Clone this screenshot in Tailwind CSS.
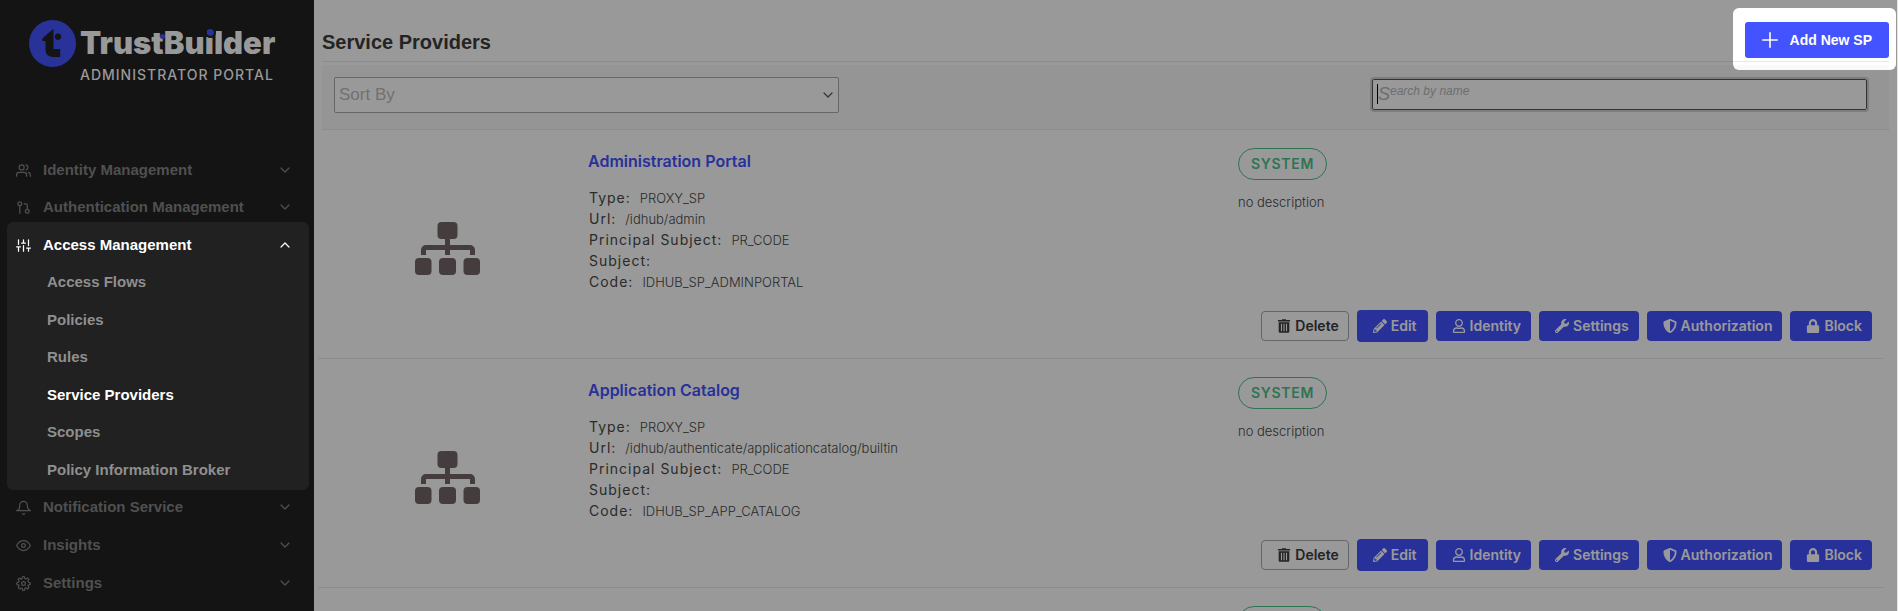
<!DOCTYPE html>
<html lang="en">
<head>
<meta charset="utf-8">
<title>TrustBuilder - Service Providers</title>
<script src="https://cdn.jsdelivr.net/npm/@tailwindcss/browser@4"></script>
</head>
<body class="flex h-screen overflow-hidden bg-white font-['Liberation_Sans',Arial,sans-serif]">

<svg class="hidden" xmlns="http://www.w3.org/2000/svg">
  <symbol id="down" viewBox="0 0 10 6"><path d="M1 1l4 4 4-4" fill="none" stroke="currentColor" stroke-width="1.2" stroke-linecap="round" stroke-linejoin="round"/></symbol>
  <symbol id="trash" viewBox="0 0 14 15"><path fill="currentColor" fill-rule="evenodd" d="M4.600 1.200L5 .3h4l.4.9H13.500v1.500H.5V1.200zM1.300 3.600h11.400v9.900a1.300 1.300 0 0 1-1.300 1.300H2.600a1.300 1.300 0 0 1-1.300-1.300zM3.700 5.200v7.900h1.200V5.200zM6.400 5.200v7.900h1.200V5.200zM9.100 5.200v7.900h1.200V5.200z"/></symbol>
  <symbol id="pencil" viewBox="0 0 512 512"><path fill="currentColor" d="M497.9 142.1l-46.1 46.1c-4.7 4.7-12.3 4.7-17 0l-111-111c-4.700-4.700-4.700-12.300 0-17l46.100-46.100c18.700-18.700 49.100-18.700 67.900 0l60.100 60.100c18.800 18.700 18.800 49.100 0 67.900zM284.200 99.800L21.600 362.400.4 483.900c-2.900 16.400 11.400 30.600 27.800 27.800l121.500-21.300 262.600-262.600c4.700-4.700 4.700-12.300 0-17l-111-111c-4.800-4.700-12.400-4.700-17.100 0zM124.100 339.900c-5.500-5.500-5.500-14.300 0-19.800l154-154c5.500-5.500 14.300-5.500 19.800 0s5.500 14.300 0 19.800l-154 154c-5.500 5.500-14.300 5.500-19.800 0zM88 424h48v36.300l-64.500 11.300-31.100-31.100L51.700 376H88v48z"/></symbol>
  <symbol id="user" viewBox="0 0 448 512"><path fill="currentColor" d="M313.600 304c-28.700 0-42.500 16-89.600 16-47.100 0-60.800-16-89.600-16C60.200 304 0 364.200 0 438.400V464c0 26.500 21.500 48 48 48h352c26.500 0 48-21.500 48-48v-25.600c0-74.200-60.200-134.400-134.400-134.400zM400 464H48v-25.600c0-47.600 38.800-86.400 86.400-86.400 14.600 0 38.300 16 89.600 16 51.700 0 74.900-16 89.600-16 47.600 0 86.400 38.800 86.400 86.400V464zM224 288c79.500 0 144-64.500 144-144S303.500 0 224 0 80 64.500 80 144s64.500 144 144 144zm0-240c52.900 0 96 43.100 96 96s-43.100 96-96 96-96-43.100-96-96 43.100-96 96-96z"/></symbol>
  <symbol id="wrench" viewBox="0 0 512 512"><path fill="currentColor" d="M507.730 109.100c-2.240-9.030-13.540-12.090-20.120-5.510l-74.360 74.360-67.880-11.310-11.310-67.880 74.360-74.360c6.620-6.620 3.430-17.900-5.660-20.160-47.380-11.740-99.550.91-136.580 37.930-39.640 39.640-50.550 97.100-34.050 147.200L18.740 402.760c-24.990 24.990-24.990 65.510 0 90.500 24.990 24.990 65.510 24.990 90.500 0l213.210-213.210c50.120 16.710 107.470 5.680 147.370-34.220 37.070-37.070 49.700-89.320 37.910-136.730zM64 472c-13.250 0-24-10.750-24-24 0-13.260 10.750-24 24-24s24 10.740 24 24c0 13.250-10.750 24-24 24z"/></symbol>
  <symbol id="shield" viewBox="0 0 512 512"><path fill="currentColor" d="M466.500 83.700l-192-80a48.150 48.150 0 0 0-36.900 0l-192 80C27.700 91.100 16 108.600 16 128c0 198.500 114.500 335.700 221.500 380.300 11.800 4.900 25.100 4.900 36.900 0C360.100 472.600 496 349.300 496 128c0-19.400-11.700-36.900-29.500-44.300zM256.100 446.300l-.1-381 175.900 73.300c-3.300 151.400-82.100 261.100-175.800 307.700z"/></symbol>
  <symbol id="lock" viewBox="0 0 448 512"><path fill="currentColor" d="M400 224h-24v-72C376 68.200 307.800 0 224 0S72 68.200 72 152v72H48c-26.500 0-48 21.500-48 48v192c0 26.500 21.500 48 48 48h352c26.500 0 48-21.500 48-48V272c0-26.500-21.500-48-48-48zm-104 0H152v-72c0-39.700 32.300-72 72-72s72 32.300 72 72v72z"/></symbol>
  <symbol id="sitemap" viewBox="0 0 65 53"><g fill="currentColor"><rect x="22.500" y="0" width="20" height="17" rx="4"/><rect x="0" y="36" width="16.500" height="17" rx="4"/><rect x="24" y="36" width="17" height="17" rx="4"/><rect x="48.500" y="36" width="16.500" height="17" rx="4"/><path d="M30 16h5v7h20a5 5 0 0 1 5 5v5h-5v-5H35v5h-5v-5H11v5H6v-5a5 5 0 0 1 5-5h19z"/></g></symbol>
</svg>

<aside class="flex w-[314px] shrink-0 flex-col bg-[#141414]">
  <header class="flex pl-[29px] pt-5">
    <svg class="size-12 shrink-0" viewBox="0 0 48 48" aria-hidden="true">
      <circle cx="23.500" cy="23.500" r="23.500" fill="#283299"/>
      <path fill="#141414" d="M24.500 8.800v20.200h6.700V37H23.500q-7-.5-7-7.500V21h-3.200V18.600z"/>
      <circle cx="29" cy="16.700" r="3.100" fill="#141414"/>
    </svg>
    <div class="flex w-[200px] flex-col pl-[3px] pt-1">
      <div class="text-[31px] leading-[38px] font-black text-[#999] font-['Inter',sans-serif]">Trust<span class="relative">B<span class="absolute -left-1 top-[10px] size-[5px] rounded-full bg-[#283299]"></span></span>u<span class="relative">i<span class="absolute left-[2px] top-[5px] size-[7px] rounded-full bg-[#283299] outline-2 outline-[#141414]"></span></span>lder</div>
      <div class="whitespace-nowrap text-[14px] leading-[26px] font-medium tracking-[1px] text-[#999] font-['Inter',sans-serif]">ADMINISTRATOR PORTAL</div>
    </div>
  </header>

  <nav class="mt-[68px] flex flex-col text-[15px] font-bold text-[#505050]">
    <div class="flex flex-col gap-[9px] pl-4 pr-6">
      <button class="flex h-7 items-center gap-3 text-left"><svg class="size-[15px]" viewBox="0 0 24 24" fill="none" stroke="currentColor" stroke-width="2" stroke-linecap="round" stroke-linejoin="round"><path d="M17 21v-2a4 4 0 0 0-4-4H5a4 4 0 0 0-4 4v2"/><circle cx="9" cy="7" r="4"/><path d="M23 21v-2a4 4 0 0 0-3-3.870M16 3.130a4 4 0 0 1 0 7.750"/></svg><span class="grow">Identity Management</span><svg class="h-[6px] w-[10px]"><use href="#down"/></svg></button>
      <button class="flex h-7 items-center gap-3 text-left"><svg class="size-[15px]" viewBox="0 0 24 24" fill="none" stroke="currentColor" stroke-width="2" stroke-linecap="round" stroke-linejoin="round"><circle cx="18" cy="18" r="3"/><circle cx="6" cy="6" r="3"/><path d="M13 6h3a2 2 0 0 1 2 2v7M6 9v12"/></svg><span class="grow">Authentication Management</span><svg class="h-[6px] w-[10px]"><use href="#down"/></svg></button>
    </div>
    <div class="ml-[7px] mr-[5px] mt-px flex h-[268px] flex-col justify-between rounded-md bg-[#212121] pl-[9px] pr-4 pt-[9px] pb-[6px] text-[#8f8f8f]">
      <button class="flex h-7 items-center gap-3 pr-[3px] text-left text-white"><svg class="size-[15px]" viewBox="0 0 24 24" fill="none" stroke="currentColor" stroke-width="2" stroke-linecap="round" stroke-linejoin="round"><path d="M4 21v-7M4 10V3M12 21v-9M12 8V3M20 21v-5M20 12V3M1 14h6M9 8h6M17 16h6"/></svg><span class="grow">Access Management</span><svg class="h-[6px] w-[10px] rotate-180"><use href="#down"/></svg></button>
      <a href="#" class="flex h-7 items-center pl-[31px]">Access Flows</a>
      <a href="#" class="flex h-7 items-center pl-[31px]">Policies</a>
      <a href="#" class="flex h-7 items-center pl-[31px]">Rules</a>
      <a href="#" class="flex h-7 items-center pl-[31px] text-white">Service Providers</a>
      <a href="#" class="flex h-7 items-center pl-[31px]">Scopes</a>
      <a href="#" class="flex h-7 items-center pl-[31px]">Policy Information Broker</a>
    </div>
    <div class="mt-[3px] flex flex-col gap-[10px] pl-4 pr-6">
      <button class="flex h-7 items-center gap-3 text-left"><svg class="size-[15px]" viewBox="0 0 24 24" fill="none" stroke="currentColor" stroke-width="2" stroke-linecap="round" stroke-linejoin="round"><path d="M18 8A6 6 0 0 0 6 8c0 7-3 9-5 9h22s-5-2-5-9M13.730 22a2 2 0 0 1-3.460 0"/></svg><span class="grow">Notification Service</span><svg class="h-[6px] w-[10px]"><use href="#down"/></svg></button>
      <button class="flex h-7 items-center gap-3 text-left"><svg class="size-[15px]" viewBox="0 0 24 24" fill="none" stroke="currentColor" stroke-width="2" stroke-linecap="round" stroke-linejoin="round"><path d="M1 12s4-8 11-8 11 8 11 8-4 8-11 8-11-8-11-8z"/><circle cx="12" cy="12" r="3"/></svg><span class="grow">Insights</span><svg class="h-[6px] w-[10px]"><use href="#down"/></svg></button>
      <button class="flex h-7 items-center gap-3 text-left"><svg class="size-[15px]" viewBox="0 0 24 24" fill="none" stroke="currentColor" stroke-width="2" stroke-linecap="round" stroke-linejoin="round"><circle cx="12" cy="12" r="3"/><path d="M19.400 15a1.650 1.650 0 0 0 .33 1.820l.06.06a2 2 0 0 1-2.830 2.830l-.06-.06a1.650 1.650 0 0 0-2.820 1.180V21a2 2 0 0 1-4 0v-.09A1.650 1.650 0 0 0 9 19.400a1.650 1.650 0 0 0-1.820.33l-.06.06a2 2 0 0 1-2.830-2.830l.06-.06a1.650 1.650 0 0 0-1.180-2.820H3a2 2 0 0 1 0-4h.09A1.650 1.650 0 0 0 4.600 9a1.650 1.650 0 0 0-.33-1.820l-.06-.06a2 2 0 0 1 2.830-2.830l.06.06A1.650 1.650 0 0 0 9 4.680a1.650 1.650 0 0 0 1-1.510V3a2 2 0 0 1 4 0v.09a1.650 1.650 0 0 0 2.820 1.180l.06-.06a2 2 0 0 1 2.830 2.830l-.06.06A1.650 1.650 0 0 0 19.400 9a1.650 1.650 0 0 0 1.510 1H21a2 2 0 0 1 0 4h-.09a1.650 1.650 0 0 0-1.510 1z"/></svg><span class="grow">Settings</span><svg class="h-[6px] w-[10px]"><use href="#down"/></svg></button>
    </div>
  </nav>
</aside>

<main class="relative flex grow flex-col overflow-hidden border-r border-[#e4e4e4]">
  <div class="mx-2 flex h-[62px] shrink-0 items-end justify-between border-b border-[#e9e9e9]">
    <h1 class="pb-[7px] text-xl leading-6 font-bold text-[#3c3c3c]">Service Providers</h1>
    <div class="relative pb-[3px]">
      <button class="flex h-9 items-center gap-3 rounded-[3px] bg-[#4353ff] px-[17px] text-sm font-bold text-white"><svg class="size-4" viewBox="0 0 16 16" stroke="currentColor" stroke-width="1.600" stroke-linecap="round"><path d="M8 .8v14.400M.8 8h14.400"/></svg>Add New SP</button>
      <!-- Tour spotlight: the shadow dims the rest of the page -->
      <div class="pointer-events-none absolute -top-[14px] -right-[7px] -bottom-[9px] -left-[12px] z-10 rounded-md shadow-[0_0_0_9999px_rgba(0,0,0,0.4)]"></div>
    </div>
  </div>

  <div class="mx-2 mt-[3px] flex h-[65px] shrink-0 items-start justify-between border-b border-[#e9e9e9] bg-[#f8f9fa] pl-3 pr-[22px] pt-3">
    <div class="relative flex w-[505px]">
      <select aria-label="Sort By" class="h-9 w-full appearance-none rounded-xs border border-[#aaa] bg-white px-1 text-[17px] text-[#bcbcbc]"><option>Sort By</option></select>
      <svg class="pointer-events-none absolute right-[6px] top-[15px] h-[6px] w-[10px] text-[#555]"><use href="#down"/></svg>
    </div>
    <div class="relative mt-[2px] w-[495px]">
      <input id="search" type="text" class="block h-[31px] w-full rounded-xs border border-[#555] bg-white px-[5px] outline-2 outline-[#d0d0d0]">
      <label for="search" class="absolute left-[5px] top-[5px] flex h-5 items-center border-l border-black text-[#b8b8b8] italic"><span class="text-lg leading-5">S</span><span class="pb-[6px] text-xs leading-[14px]">earch by name</span></label>
    </div>
  </div>

  <div id="cards" class="ml-1 mr-[14px] font-['Inter',sans-serif]"></div>
</main>

<script>
const providers = [
  { name: 'Administration Portal', url: '/idhub/admin', code: 'IDHUB_SP_ADMINPORTAL' },
  { name: 'Application Catalog', url: '/idhub/authenticate/applicationcatalog/builtin', code: 'IDHUB_SP_APP_CATALOG' }
];
const row = (label, value) => `<div class="flex h-[21px] items-baseline gap-[9px]"><dt class="text-sm leading-[21px] tracking-[1px]">${label}:</dt><dd class="text-[13px] leading-[21px] font-light">${value}</dd></div>`;
const action = (icon, label) => `<button class="flex h-[30px] items-center gap-1 rounded-sm bg-[#4353ff] pl-4 pr-[10px] text-white"><svg class="size-[14px]"><use href="#${icon}"/></svg>${label}</button>`;
const card = p => `
  <article class="flex h-[229px] border-b border-[#e9e9e9] text-[#484848]">
    <div class="flex w-[270px] shrink-0 pl-[97px] pt-[92px]"><svg class="h-[53px] w-[65px] text-[#736767]"><use href="#sitemap"/></svg></div>
    <div class="flex grow flex-col">
      <div class="flex grow">
        <div class="w-[650px] shrink-0 pt-[19px]">
          <h2 class="text-base leading-6 font-semibold text-[#4353ff]"><a href="#">${p.name}</a></h2>
          <dl class="pt-[14px] pl-px">${row('Type', 'PROXY_SP')}${row('Url', p.url)}${row('Principal Subject', 'PR_CODE')}${row('Subject', '')}${row('Code', p.code)}</dl>
        </div>
        <div class="flex flex-col items-start pt-[18px]">
          <span class="flex h-8 items-center rounded-full border border-[#4dc28b] px-3 text-sm font-semibold tracking-wider text-[#4dc28b]">SYSTEM</span>
          <p class="pt-3 text-[13px] leading-5 font-light">no description</p>
        </div>
      </div>
      <div class="flex items-center justify-end gap-2 pr-[11px] pb-4 text-sm font-semibold">
        <button class="flex h-[30px] items-center gap-1 rounded-sm border border-[#aaa] pl-[15px] pr-[9px] text-[#3c3c3c]"><svg class="size-[14px]"><use href="#trash"/></svg>Delete</button>
        <button class="flex h-8 items-center gap-1 rounded-sm bg-[#4353ff] pl-4 pr-[11px] text-white"><svg class="size-[14px]"><use href="#pencil"/></svg>Edit</button>
        ${action('user', 'Identity')}${action('wrench', 'Settings')}${action('shield', 'Authorization')}${action('lock', 'Block')}
      </div>
    </div>
  </article>`;
// The next entry only peeks in at the bottom: the top of its badge
const peek = `<article class="pl-[920px] pt-[18px]"><div class="h-8 w-[88px] rounded-full border border-[#4dc28b]"></div></article>`;
document.getElementById('cards').innerHTML = providers.map(card).join('') + peek;
</script>
</body>
</html>
